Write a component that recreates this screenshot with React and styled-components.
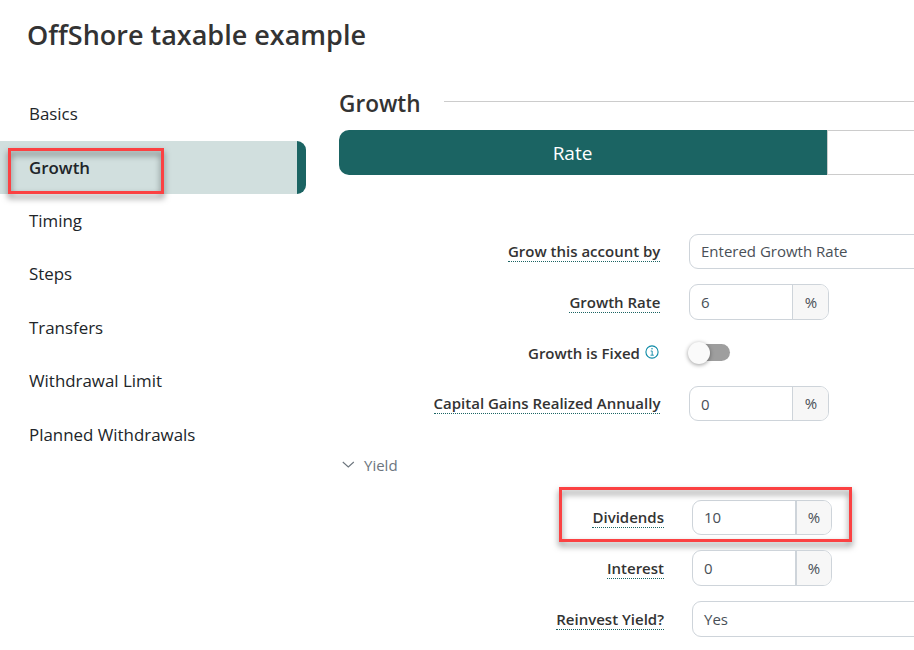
import React from "react";
import styled, { createGlobalStyle } from "styled-components";

const GlobalStyle = createGlobalStyle`
  * { box-sizing: border-box; }
  body {
    margin: 0;
    background: #fff;
    font-family: "Open Sans", "Noto Sans", sans-serif;
    color: #333;
    overflow: hidden;
  }
`;

const Page = styled.div`
  width: 914px;
  height: 650px;
  overflow: hidden;
  background: #fff;
`;

const Title = styled.h1`
  margin: 0;
  height: 87.5px;
  padding: 16px 0 0 27px;
  font-size: 27px;
  line-height: 37px;
  font-weight: 600;
  color: #333;
  white-space: nowrap;
`;

const Body = styled.div`
  display: flex;
  align-items: flex-start;
`;

const Nav = styled.nav`
  width: 306px;
  flex: none;
  display: flex;
  flex-direction: column;
`;

const NavItem = styled.a`
  position: relative;
  display: flex;
  align-items: center;
  height: 53.4px;
  padding: 0 0 0.9px 29px;
  font-size: 16.9px;
  font-weight: ${(p) => (p.$active ? 600 : 400)};
  color: #212529;
  background: ${(p) => (p.$active ? "#d1dfde" : "transparent")};
  border-right: ${(p) => (p.$active ? "9px solid #1b6463" : "0")};
  border-radius: 0 9px 9px 0;
`;

const Highlight = styled.span`
  position: absolute;
  left: ${(p) => p.$left}px;
  top: ${(p) => p.$top}px;
  width: ${(p) => p.$width}px;
  height: ${(p) => p.$height}px;
  border: 3px solid #fb4142;
  filter: drop-shadow(0 4px 3px rgba(0, 0, 0, 0.5));
  pointer-events: none;
`;

const Main = styled.main`
  margin-left: 33px;
  width: 620px;
  flex: none;
`;

const SectionHead = styled.div`
  display: flex;
  align-items: flex-start;
  height: 42.5px;
`;

const SectionTitle = styled.h2`
  margin: 0;
  width: 105px;
  font-size: 22.6px;
  line-height: 31px;
  font-weight: 600;
  color: #333;
`;

const Rule = styled.div`
  flex: 1;
  height: 1px;
  margin-top: 13.5px;
  background: #ccc;
`;

const Tabs = styled.div`
  display: flex;
  height: 45px;
`;

const Tab = styled.div`
  width: 488px;
  display: flex;
  align-items: center;
  justify-content: center;
  padding-right: 21px;
  font-size: 19px;
  color: #fff;
  background: #1b6463;
  border-radius: 10px 0 0 10px;
`;

const EmptyTab = styled.div`
  flex: 1;
  border: 1px solid #ccc;
  border-right: 0;
`;

const Rows = styled.div`
  margin-top: ${(p) => p.$top || 0}px;
  padding-left: ${(p) => p.$indent || 0}px;
`;

const Row = styled.div`
  position: relative;
  display: flex;
  height: 50.8px;
`;

const LabelCell = styled.div`
  width: 350px;
  height: 35.45px;
  flex: none;
  display: flex;
  align-items: center;
  justify-content: flex-end;
  gap: 5.5px;
  padding-right: ${(p) => (p.$nested ? 28 : 28.6)}px;

  svg {
    margin: 0 1px 1px 0;
  }
`;

const Label = styled.span`
  font-size: 15px;
  line-height: 19px;
  font-weight: 600;
  color: #333;
  white-space: nowrap;
  margin-top: 1.4px;
  border-bottom: 1px ${(p) => (p.$plain ? "none" : "dotted")} #1b6463;
`;

const Field = styled.div`
  display: flex;
  width: ${(p) => (p.$wide ? 260 : 140)}px;
  height: 35.45px;
  border: 1px solid #ced4da;
  border-radius: 9px;
  overflow: hidden;
  font-size: 15px;
  color: #495057;
  background: #fff;
`;

const Value = styled.div`
  flex: 1;
  display: flex;
  align-items: center;
  padding-left: 11px;
  white-space: nowrap;
`;

const Unit = styled.div`
  width: 36px;
  display: flex;
  align-items: center;
  justify-content: center;
  padding: 0 0 1px ${(p) => (p.$thick ? 0 : 1)}px;
  background: #f7f7f7;
  border-left: ${(p) => (p.$thick ? 2 : 1)}px solid #ced4da;
`;

const Toggle = styled.div`
  width: 41px;
  height: 17px;
  margin: 9px 0 0 0;
  border-radius: 9px;
  background: #9e9e9e;
`;

const Knob = styled.div`
  width: 22px;
  height: 22px;
  margin: -2px 0 0 -1px;
  border-radius: 50%;
  background: #fafafa;
  box-shadow: 0 1px 4px rgba(0, 0, 0, 0.4);
`;

const GroupToggle = styled.div`
  display: flex;
  align-items: center;
  height: 57px;
  margin-bottom: 5.8px;
  gap: 9px;
  padding-left: 3px;
  font-size: 15px;
  color: #6c757d;
`;

const InfoIcon = () => (
  <svg width="14" height="14" viewBox="0 0 14 14" fill="none" stroke="#0d8aa6">
    <circle cx="7" cy="7" r="6.1" strokeWidth="1.1" />
    <path d="M5.7 6H7.2V10M5.5 10.2H8.8" strokeWidth="0.9" />
    <circle cx="7" cy="3.8" r="0.75" fill="#0d8aa6" stroke="none" />
  </svg>
);

const Chevron = () => (
  <svg width="13" height="8" viewBox="0 0 13 8" fill="none" stroke="#6c757d">
    <path d="M0.8 1L6.3 6L11.8 1" strokeWidth="1.1" />
  </svg>
);

const NAV = ["Basics", "Growth", "Timing", "Steps", "Transfers", "Withdrawal Limit", "Planned Withdrawals"];

const PercentField = ({ value, thick }) => (
  <Field>
    <Value>{value}</Value>
    <Unit $thick={thick}>%</Unit>
  </Field>
);

const FormRow = ({ label, plain, info, nested, children }) => (
  <Row>
    <LabelCell $nested={nested}>
      <Label $plain={plain}>{label}</Label>
      {info}
    </LabelCell>
    {children}
  </Row>
);

export default function App() {
  return (
    <Page>
      <GlobalStyle />
      <Title>OffShore taxable example</Title>
      <Body>
        <Nav>
          {NAV.map((name) => (
            <NavItem key={name} $active={name === "Growth"}>
              {name}
              {name === "Growth" && <Highlight $left={8} $top={7} $width={156} $height={46} />}
            </NavItem>
          ))}
        </Nav>
        <Main>
          <SectionHead>
            <SectionTitle>Growth</SectionTitle>
            <Rule />
          </SectionHead>
          <Tabs>
            <Tab>Rate</Tab>
            <EmptyTab />
          </Tabs>
          <Rows $top={58.6}>
            <FormRow label="Grow this account by">
              <Field $wide>
                <Value>Entered Growth Rate</Value>
              </Field>
            </FormRow>
            <FormRow label="Growth Rate">
              <PercentField value="6" />
            </FormRow>
            <FormRow label="Growth is Fixed" plain info={<InfoIcon />}>
              <Toggle>
                <Knob />
              </Toggle>
            </FormRow>
            <FormRow label="Capital Gains Realized Annually">
              <PercentField value="0" />
            </FormRow>
          </Rows>
          <GroupToggle>
            <Chevron />
            Yield
          </GroupToggle>
          <Rows $indent={3}>
            <FormRow label="Dividends" nested>
              <PercentField value="10" thick />
              <Highlight $left={217} $top={-12.6} $width={293} $height={55} />
            </FormRow>
            <FormRow label="Interest" nested>
              <PercentField value="0" thick />
            </FormRow>
            <FormRow label="Reinvest Yield?" nested>
              <Field $wide>
                <Value>Yes</Value>
              </Field>
            </FormRow>
          </Rows>
        </Main>
      </Body>
    </Page>
  );
}
